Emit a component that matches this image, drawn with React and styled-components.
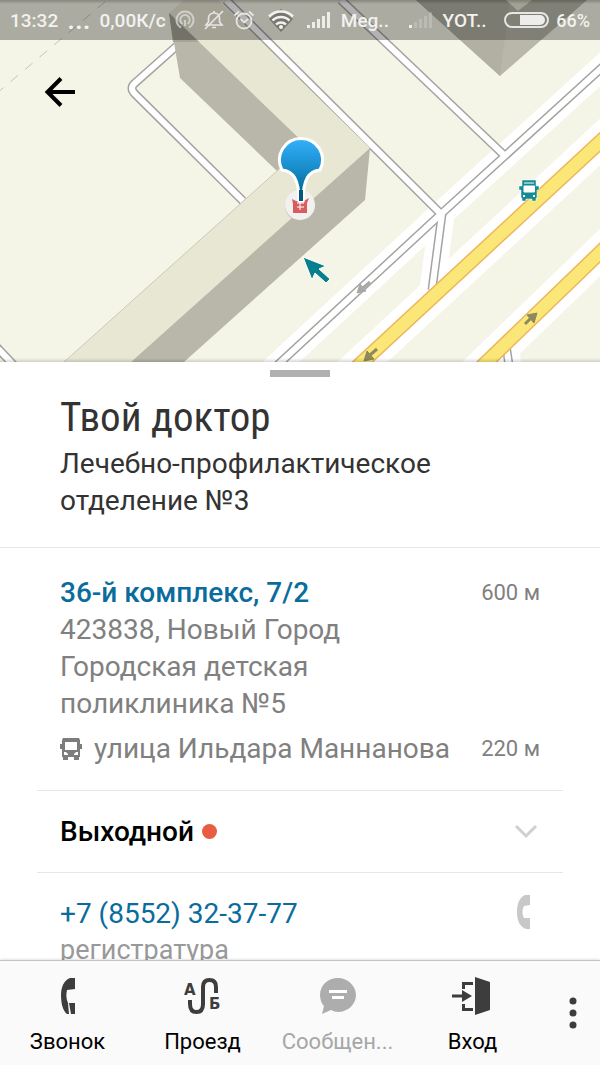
import React from "react";
import styled, { createGlobalStyle } from "styled-components";

const GlobalStyle = createGlobalStyle`
  * {
    box-sizing: border-box;
  }
  body {
    margin: 0;
    font-family: Roboto, "Noto Sans", sans-serif;
    background-color: #fff;
  }
`;

const SignalIcon = ({ level }) => (
  <svg width="27" height="18" viewBox="-1 0 27 18" aria-hidden="true">
    {[3, 6, 9, 12, 16].map((h, i) => (
      <rect
        key={h}
        x={i * 5 + 1}
        y={17 - h}
        width="3"
        height={h}
        fill="#ededea"
        opacity={i < level ? 1 : 0.25}
      />
    ))}
  </svg>
);

const HotspotIcon = () => (
  <svg width="20" height="20" viewBox="0 0 20 20" fill="none" stroke="#dededa" strokeWidth="2" opacity="0.75" aria-hidden="true">
    <path d="M6 17.5a8.5 8.5 0 1 1 8 0" />
    <path d="M7.5 14a4.8 4.8 0 1 1 5 0" />
    <path d="M10 10v6" />
  </svg>
);

const BellOffIcon = () => (
  <svg width="20" height="20" viewBox="0 0 20 20" fill="none" stroke="#e6e6e2" strokeWidth="1.7" aria-hidden="true">
    <path d="M2 15h16l-2.500-3V8.500C15.500 5 13 3 10 3S4.500 5 4.500 8.500V12z" />
    <path d="M10 1v2M8 17.500h4M1 19L19 1" />
  </svg>
);

const AlarmIcon = () => (
  <svg width="22" height="20" viewBox="0 0 22 20" fill="none" stroke="#e6e6e2" strokeWidth="1.8" aria-hidden="true">
    <circle cx="11" cy="11" r="7.5" />
    <path d="M7.500 9l3.500 3.500L15 9M1.500 5.500L6 1.500M20.500 5.500L16 1.500" />
  </svg>
);

const WifiIcon = () => (
  <svg width="32" height="26" viewBox="-3 0 32 26" fill="none" stroke="#f2f2ef" strokeWidth="2.5" aria-hidden="true">
    <path d="M14 25L2 12L14 2L26 12z" fill="#000" opacity="0.3" stroke="none" />
    <path d="M2 9.500a17 17 0 0 1 24 0M5.500 13.500a12 12 0 0 1 17 0M9 17.500a7 7 0 0 1 10 0" />
    <circle cx="14" cy="20" r="2" fill="#f2f2ef" stroke="none" />
  </svg>
);

const BatteryIcon = () => (
  <svg width="46" height="18" viewBox="0 0 46 18" aria-hidden="true">
    <rect x="1" y="2" width="43" height="14" rx="7" fill="none" stroke="#e6e6e2" strokeWidth="2" />
    <path d="M16 4h20a5 5 0 0 1 0 10H16z" fill="#ededea" />
  </svg>
);

const BackIcon = () => (
  <svg width="32" height="32" viewBox="0 0 32 32" fill="none" stroke="#000" strokeWidth="4" aria-hidden="true">
    <path d="M31 16H4M17 2.500L3.500 16L17 29.500" />
  </svg>
);

const BusIcon = ({ color }) => (
  <svg width="22" height="24" viewBox="0 0 22 24" fill={color} aria-hidden="true">
    <path
      fillRule="evenodd"
      d="M3 1h16l1 2v4h2v5h-2v8h-1v3h-5v-3H8v3H3v-3H2v-8H0V7h2V3zM5 5v8h12V5zM4 15v3h4v-1l-2-2zM18 15v3h-4v-1l2-2z"
    />
  </svg>
);

const ChevronIcon = () => (
  <svg width="24" height="16" viewBox="0 0 24 16" fill="none" stroke="#d0d0d0" strokeWidth="3" aria-hidden="true">
    <path d="M2 2l10 10L22 2" />
  </svg>
);

const HandsetIcon = () => (
  <svg width="14" height="34" viewBox="0 0 14 34" fill="#c8c8c8" aria-hidden="true">
    <path d="M8 0h5v10l-6 1C5 14 5 20 7 23h6v11H9C3 32 0 26 0 17S3 2 8 0z" />
  </svg>
);

const CallIcon = () => (
  <svg width="38" height="38" viewBox="0 0 38 38" fill="#3d3d3d" aria-hidden="true">
    <path d="M26 1h-5c-6 2-9 9-9 17 0 9 2 16 6 19h2l-1-11c-2-4-2-9-1-13l8-1zM20 26h6v11h-4z" />
  </svg>
);

const RouteIcon = () => (
  <svg width="38" height="38" viewBox="0 0 38 38" aria-hidden="true">
    <g fill="#3d3d3d" fontFamily="DejaVu Sans" fontSize="15" fontWeight="700">
      <text x="0" y="18">А</text>
      <text x="25" y="32">Б</text>
    </g>
    <path
      d="M6 23v4q0 8 6.500 8T19 27V10q0-7 6.500-7T32 10v6"
      fill="none"
      stroke="#3d3d3d"
      strokeWidth="4"
    />
  </svg>
);

const MessageIcon = () => (
  <svg width="38" height="38" viewBox="0 0 38 38" aria-hidden="true">
    <path d="M19 1C9 1 1 8 1 18c0 5 2 9 4 11L3 37l9-4c2 1 5 2 7 2 10 0 18-8 18-17S29 1 19 1z" fill="#adadad" />
    <path d="M10 14.500h18M13 20.500h12" stroke="#fff" strokeWidth="3" />
  </svg>
);

const EnterIcon = () => (
  <svg width="38" height="38" viewBox="0 0 38 38" aria-hidden="true">
    <path d="M21 0l15 5v28l-15 5z" fill="#3d3d3d" />
    <path d="M19 6.500H9.500V12M19 32.500H9.500V27M-2 19h12" fill="none" stroke="#3d3d3d" strokeWidth="3" />
    <path d="M8 13l10 6-10 6z" fill="#3d3d3d" />
  </svg>
);

const MoreIcon = () => (
  <svg width="8" height="32" viewBox="0 0 8 32" fill="#3d3d3d" aria-hidden="true">
    <circle cx="4" cy="4" r="3.5" />
    <circle cx="4" cy="16" r="3.5" />
    <circle cx="4" cy="28" r="3.5" />
  </svg>
);

const mainStreets = [
  "M640 33L441 214L270 372",
  "M442 214L432 290",
  "M506 345L510 372",
];
const yards = [
  "M215 12L135 83Q129 88 135 94L243 201",
  "M226 0L441 214",
  "M341 0L505 156",
  "M-10 340L24 376",
];
const avenues = ["M640 105L343 380", "M640 214L468 380"];

const MapPicture = () => (
  <MapSvg viewBox="0 0 600 362" preserveAspectRatio="xMidYMin slice" role="img" aria-label="Карта">
    <defs>
      <linearGradient id="pin" x1="0" y1="0" x2="0" y2="1">
        <stop offset="0" stopColor="#35b0fb" />
        <stop offset="0.5" stopColor="#168bc8" />
        <stop offset="1" stopColor="#00597f" />
      </linearGradient>
      <linearGradient id="edge" x1="0" y1="0" x2="0" y2="1">
        <stop offset="0" stopColor="#000" stopOpacity="0" />
        <stop offset="1" stopColor="#000" stopOpacity="0.15" />
      </linearGradient>
    </defs>
    <rect width="600" height="362" fill="#f5f5e7" />
    <path d="M-4 94L112 -4" stroke="#c4c4ba" strokeDasharray="10 9" fill="none" />

    <g fill="none">
      {mainStreets.map((d) => (
        <path key={d} d={d} stroke="#fff" strokeWidth="25" />
      ))}
      {avenues.map((d) => (
        <path key={d} d={d} stroke="#fff" strokeWidth="34" />
      ))}
      {[...yards, ...mainStreets].map((d) => (
        <path key={d} d={d} stroke="#a3a3a1" strokeWidth="9" />
      ))}
      {[...yards, ...mainStreets].map((d) => (
        <path key={d} d={d} stroke="#fff" strokeWidth="6" />
      ))}
      {avenues.map((d) => (
        <g key={d}>
          <path d={d} stroke="#ecb65c" strokeWidth="15" />
          <path d={d} stroke="#fae777" strokeWidth="12" />
        </g>
      ))}
    </g>

    <path d="M169 13L184 0H218L370 148L131 362H64L277 171L306 145z" fill="#e8e7d3" />
    <path d="M64 362L277 171" stroke="#cbc9b7" />
    <path d="M169 13L180 78L277 171L306 145z" fill="#b8b7a9" />
    <path d="M169 13L173 42H199z" fill="#a5a497" />
    <path d="M370 148L365 200L184 362H131z" fill="#b8b7a9" />
    <path d="M416 0L500 76L587 0z" fill="#b8b7a9" />
    <path d="M416 0H510L500 76z" fill="#b1b0a3" />
    <path d="M506 0L518 11L532 0z" fill="#e8e7d3" />

    <g stroke="#8c8a5c" strokeWidth="3" fill="#8c8a5c">
      <path d="M377 349L370 355" />
      <path d="M364 361l3-10 7 8z" strokeWidth="1" />
      <path d="M525 324L532 317" />
      <path d="M537 313l-10 2 7 8z" strokeWidth="1" />
    </g>
    <g stroke="#a8a8a6" strokeWidth="3" fill="#a8a8a6">
      <path d="M370 282L363 288" />
      <path d="M357 293l3-9 6 7z" strokeWidth="1" />
    </g>

    <g>
      <path
        d="M522 180h14v6h3v4h-2v8h-1v3h-4v-2h-6v2h-4v-3h-1v-8h-2v-4h3z"
        fill="#128c96"
        stroke="#fff"
        strokeWidth="0.5"
      />
      <path d="M524 183h10M524 186h10.500v6h-10.500z" fill="#fff" stroke="#fff" strokeWidth="1" />
      <path d="M523 196h2M533 196h2" stroke="#fff" strokeWidth="2" />
    </g>

    <circle cx="300" cy="206" r="15" fill="#bdbcb2" />
    <circle cx="300" cy="205" r="15" fill="#f3f1ef" />
    <path d="M292 199l4 2h8l5-3-2 5v10h-14v-9z" fill="#d95c5f" />
    <path d="M297 203h7M297 207h7M300 200v10" stroke="#fff" strokeWidth="1" />
    <path
      d="M282 170A21.500 21.500 0 1 1 320 170C309 171 303 179 303 201H299C299 179 293 171 282 170z"
      fill="url(#pin)"
      stroke="#fff"
      strokeWidth="3"
    />
    <path d="M299 190h4v11h-4z" fill="#00597f" />
    <path
      d="M303 257l23 9-7 3 11 10-4 4-11-10-3 7z"
      fill="#087f8c"
      stroke="#fff"
      strokeWidth="1"
    />
    <rect y="358" width="600" height="4" fill="url(#edge)" />
  </MapSvg>
);

const tabs = [
  { label: "Звонок", Icon: CallIcon },
  { label: "Проезд", Icon: RouteIcon },
  { label: "Сообщен...", Icon: MessageIcon, disabled: true },
  { label: "Вход", Icon: EnterIcon },
];

const App = () => {
  return (
    <Screen>
      <GlobalStyle />
      <StatusBar>
        <StatusGroup>
          <span>13:32</span>
          <StatusDots>...</StatusDots>
          <span>0,00К/с</span>
          <HotspotIcon />
          <BellOffIcon />
          <AlarmIcon />
          <WifiIcon />
          <SignalIcon level={5} />
          <span>Meg..</span>
        </StatusGroup>
        <StatusGroup>
          <SignalIcon level={1} />
          <span>YOT..</span>
        </StatusGroup>
        <StatusGroup>
          <BatteryIcon />
          <span>66%</span>
        </StatusGroup>
      </StatusBar>

      <Content>
        <MapArea>
          <MapPicture />
          <BackButton aria-label="Назад">
            <BackIcon />
          </BackButton>
        </MapArea>

        <Header>
          <Handle />
          <Title>Твой доктор</Title>
          <Subtitle>Лечебно-профилактическое отделение №3</Subtitle>
        </Header>

        <Card>
          <Row>
            <AddressLink href="#address">36-й комплекс, 7/2</AddressLink>
            <Distance>600 м</Distance>
          </Row>
          <Details>
            423838, Новый Город
            <br />
            Городская детская
            <br />
            поликлиника №5
          </Details>
          <StopRow>
            <Stop>
              <BusIcon color="#7d7d7d" />
              улица Ильдара Маннанова
            </Stop>
            <Distance>220 м</Distance>
          </StopRow>
        </Card>

        <HoursButton>
          <Hours>
            Выходной
            <Dot />
          </Hours>
          <ChevronIcon />
        </HoursButton>

        <Contact>
          <div>
            <PhoneLink href="tel:+78552323777">+7 (8552) 32-37-77</PhoneLink>
            <PhoneNote>регистратура</PhoneNote>
          </div>
          <HandsetIcon />
        </Contact>
      </Content>

      <TabBar>
        {tabs.map(({ label, Icon, disabled }) => (
          <TabButton key={label} disabled={disabled}>
            <Icon />
            {label}
          </TabButton>
        ))}
        <MoreButton aria-label="Ещё">
          <MoreIcon />
        </MoreButton>
      </TabBar>
    </Screen>
  );
};

const Screen = styled.div`
  position: relative;
  display: flex;
  flex-direction: column;
  height: 100vh;
  overflow: hidden;
`;

const StatusBar = styled.div`
  position: absolute;
  top: 0;
  left: 0;
  right: 0;
  z-index: 1;
  display: flex;
  justify-content: space-between;
  align-items: center;
  height: 40px;
  padding: 0 10px;
  color: #f2f2ef;
  font-size: 19px;
  font-weight: 500;
  background: linear-gradient(rgba(0, 0, 0, 0.45), rgba(0, 0, 0, 0.3) 4px);
`;

const StatusGroup = styled.div`
  display: flex;
  align-items: center;
  gap: 9px;

  &:last-child {
    gap: 6px;
    font-size: 18px;
  }
`;

const StatusDots = styled.span`
  font-size: 28px;
  line-height: 20px;
`;

const Content = styled.main`
  flex: 1;
  min-height: 0;
  overflow-y: auto;
  scrollbar-width: none;
`;

const MapArea = styled.div`
  position: relative;
  height: 362px;
`;

const MapSvg = styled.svg`
  display: block;
  width: 100%;
  height: 100%;
`;

const BackButton = styled.button`
  position: absolute;
  top: 68px;
  left: 36px;
  display: flex;
  padding: 8px;
  border: none;
  background: none;
`;

const Header = styled.header`
  padding: 8px 60px 28px;
  border-bottom: 1px solid #e6e6e6;
`;

const Handle = styled.div`
  width: 60px;
  height: 7px;
  margin: 0 auto;
  background-color: #b1b1b1;
`;

const Title = styled.h1`
  margin: 12px 0 0;
  color: #333;
  font-family: "Roboto Condensed", Roboto, sans-serif;
  font-size: 41px;
  font-weight: 400;
  line-height: 56px;
`;

const Subtitle = styled.p`
  margin: 0;
  color: #333;
  font-size: 28px;
  line-height: 37px;
`;

const Card = styled.section`
  margin: 0 37px;
  padding: 26px 23px 23px;
  border-bottom: 1px solid #e6e6e6;
`;

const Row = styled.div`
  display: flex;
  justify-content: space-between;
  align-items: center;
`;

const StopRow = styled(Row)`
  margin-top: 8px;
`;

const AddressLink = styled.a`
  color: #0a6c9c;
  font-size: 28px;
  font-weight: 500;
  line-height: 37px;
  text-decoration: none;
`;

const Distance = styled.span`
  color: #808080;
  font-size: 22px;
`;

const Details = styled.p`
  margin: 0;
  color: #808080;
  font-size: 28px;
  line-height: 37px;
`;

const Stop = styled.span`
  display: flex;
  align-items: center;
  gap: 12px;
  color: #808080;
  font-size: 28px;
  line-height: 37px;
`;

const HoursButton = styled.button`
  display: flex;
  justify-content: space-between;
  align-items: center;
  width: calc(100% - 74px);
  height: 82px;
  margin: 0 37px;
  padding: 0 25px 0 23px;
  border: none;
  border-bottom: 1px solid #e6e6e6;
  background: none;
  font-family: inherit;
`;

const Hours = styled.span`
  display: flex;
  align-items: center;
  gap: 8px;
  color: #000;
  font-size: 28px;
  font-weight: 500;
`;

const Dot = styled.span`
  width: 15px;
  height: 15px;
  border-radius: 50%;
  background-color: #ea5b44;
`;

const Contact = styled.section`
  display: flex;
  justify-content: space-between;
  align-items: flex-start;
  padding: 22px 69px 22px 60px;
`;

const PhoneLink = styled.a`
  color: #0a6c9c;
  font-size: 28px;
  line-height: 37px;
  text-decoration: none;
`;

const PhoneNote = styled.p`
  margin: 0;
  color: #999;
  font-size: 27px;
  line-height: 37px;
`;

const TabBar = styled.nav`
  display: flex;
  height: 105px;
  border-top: 1px solid #c4c4c4;
  background-color: #fafafa;
  box-shadow: 0 0 3px rgba(0, 0, 0, 0.2);
  z-index: 1;
`;

const TabButton = styled.button`
  flex: 1;
  display: flex;
  flex-direction: column;
  align-items: center;
  gap: 14px;
  min-width: 0;
  padding: 16px 0 0;
  border: none;
  background: none;
  color: ${({ disabled }) => (disabled ? "#a6a6a6" : "#000")};
  font-family: inherit;
  font-size: 22px;
  line-height: 26px;

  svg {
    overflow: visible;
  }
`;

const MoreButton = styled.button`
  display: flex;
  justify-content: center;
  align-items: center;
  width: 60px;
  padding: 0 0 0 6px;
  border: none;
  background: none;
`;

export default App;
